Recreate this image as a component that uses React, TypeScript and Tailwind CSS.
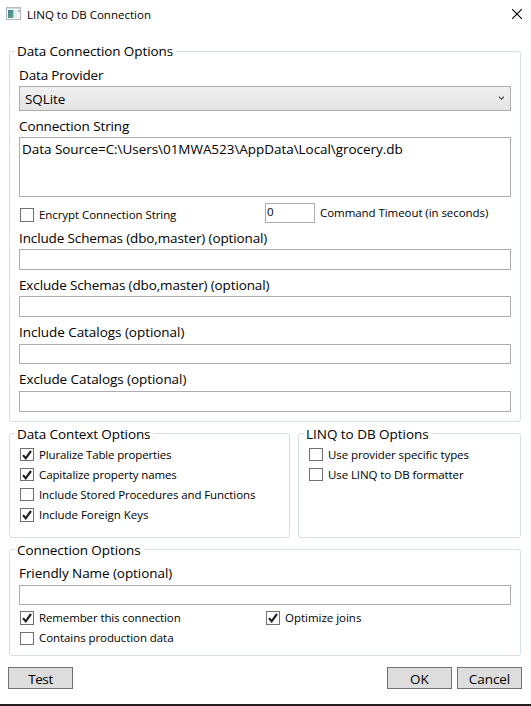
import type { ReactNode } from "react";

function Group({ title, legend, className, children }: { title: string; legend: string; className: string; children: ReactNode }) {
  return (
    <section className={`flex flex-col items-start rounded-[3px] border border-[#d5dfe5] ${className}`}>
      <h2 className={`ml-[5px] h-[18px] shrink-0 bg-white pr-[3px] pl-[2px] leading-[18px] ${legend}`}>{title}</h2>
      {children}
    </section>
  );
}

function Label({ className, children }: { className: string; children: ReactNode }) {
  return <label className={`ml-[9px] h-[18px] shrink-0 leading-[18px] ${className}`}>{children}</label>;
}

function Field({ className }: { className: string }) {
  return <div className={`ml-[9px] w-[492px] shrink-0 border border-[#abadb3] bg-white ${className}`} />;
}

function Check({ label, checked, className, box = "h-[14px]" }: { label: string; checked?: boolean; className: string; box?: string }) {
  return (
    <div className={`flex h-[14px] shrink-0 items-start text-[11.5px] ${className}`}>
      <span className={`w-[14px] shrink-0 border border-[#707070] bg-white ${box}`}>
        {checked && (
          <svg viewBox="0 0 12 12" className="size-3">
            <path d="M2 6.1 4.7 9.3 10 2" fill="none" stroke="#212121" strokeWidth="2.2" />
          </svg>
        )}
      </span>
      <span className="-mt-px ml-[5px] leading-[15px]">{label}</span>
    </div>
  );
}

function Button({ className, children }: { className: string; children: ReactNode }) {
  return (
    <button className={`flex h-[22px] w-[65px] items-start justify-center border border-[#707070] bg-[#dddddd] pt-[2px] leading-[18px] ${className}`}>
      {children}
    </button>
  );
}

export default function App() {
  return (
    <main className="flex h-[706px] w-[531px] flex-col overflow-hidden bg-white font-['Open_Sans',sans-serif] text-[13.5px] whitespace-nowrap text-black">
      <header className="flex h-[51px] shrink-0 items-start">
        <svg viewBox="0 0 15 13" className="mt-[7px] ml-[6px] h-[13px] w-[15px]">
          <defs>
            <linearGradient id="pane" x1="0" y1="0" x2="1" y2="1">
              <stop offset="0" stopColor="#3f7f9c" />
              <stop offset="1" stopColor="#62ad85" />
            </linearGradient>
          </defs>
          <rect x=".5" y=".5" width="14" height="12" fill="#f7f8f9" stroke="#b5b9be" />
          <rect x="1" y="1" width="13" height="1" fill="#d7dade" />
          <rect x="2" y="3" width="5.5" height="8" fill="url(#pane)" />
          <rect x="8" y="3" width="3" height="8" fill="#e9ebed" />
          <rect x="12" y="3" width="2" height="2" fill="#9cc5bd" />
        </svg>
        <h1 className="mt-[7px] ml-[6px] text-[11.5px] leading-[15px] tracking-[0.01px]">LINQ to DB Connection</h1>
        <svg viewBox="0 0 10 10" className="mt-[9px] mr-[9px] ml-auto size-[10px]">
          <path d="M0 0 10 10M10 0 0 10" stroke="#000" strokeWidth="1.1" />
        </svg>
      </header>

      <Group title="Data Connection Options" legend="-mt-[10px] tracking-[-0.1px]" className="ml-[9px] h-[371px] w-[512px] shrink-0">
        <Label className="mt-[6px] tracking-[-0.16px]">Data Provider</Label>
        <div className="mt-[2px] ml-[9px] flex h-[25px] w-[492px] shrink-0 items-start border border-[#acacac] bg-gradient-to-b from-[#f0f0f0] to-[#e5e5e5] pr-[6px] pl-[5px]">
          <span className="mt-[3px] leading-[18px] tracking-[-0.1px]">SQLite</span>
          <svg viewBox="0 0 5 4" className="mt-[9px] ml-auto h-[4px] w-[5px]">
            <path d="M0 0 2.5 2.2 5 0V1.7L2.5 4 0 1.7Z" fill="#505050" />
          </svg>
        </div>
        <Label className="mt-[6px] tracking-[-0.11px]">Connection String</Label>
        <div className="mt-[2px] ml-[9px] h-[60px] w-[492px] shrink-0 border border-[#abadb3] pt-[2px] pl-[2px] leading-[18px] tracking-[-0.045px]">
          Data Source=C:\Users\01MWA523\AppData\Local\grocery.db
        </div>
        <div className="mt-[6px] ml-[10px] flex h-[20px] shrink-0 items-start">
          <Check label="Encrypt Connection String" className="mt-[5px] w-[245px] tracking-[-0.07px]" />
          <div className="h-[20px] w-[50px] border border-[#abadb3] pl-px text-[11.5px] leading-[15px]">0</div>
          <span className="mt-[2px] ml-[5px] text-[11.5px] leading-[15px] tracking-[-0.06px]">Command Timeout (in seconds)</span>
        </div>
        <Label className="mt-[6px] tracking-[-0.125px]">Include Schemas (dbo,master) (optional)</Label>
        <Field className="mt-[2px] h-[21px]" />
        <Label className="mt-[6px] tracking-[-0.135px]">Exclude Schemas (dbo,master) (optional)</Label>
        <Field className="mt-[2px] h-[21px]" />
        <Label className="mt-[6px] tracking-[-0.045px]">Include Catalogs (optional)</Label>
        <Field className="mt-[3px] h-[20px]" />
        <Label className="mt-[6px] tracking-[-0.065px]">Exclude Catalogs (optional)</Label>
        <Field className="mt-[3px] h-[21px]" />
      </Group>

      <div className="mt-[11px] ml-[9px] flex h-[105px] shrink-0 gap-2">
        <Group title="Data Context Options" legend="-mt-[9px] tracking-[-0.11px]" className="w-[281px]">
          <Check label="Pluralize Table properties" checked box="h-[13px]" className="mt-[5px] ml-[10px] tracking-[-0.16px]" />
          <Check label="Capitalize property names" checked box="h-[13px]" className="mt-[6px] ml-[10px] tracking-[-0.11px]" />
          <Check label="Include Stored Procedures and Functions" box="h-[13px]" className="mt-[6px] ml-[10px] tracking-[-0.105px]" />
          <Check label="Include Foreign Keys" checked className="mt-[6px] ml-[10px] tracking-[-0.04px]" />
        </Group>
        <Group title="LINQ to DB Options" legend="-mt-[9px] tracking-[-0.03px]" className="w-[223px]">
          <Check label="Use provider specific types" box="h-[13px]" className="mt-[5px] ml-[10px] tracking-[-0.09px]" />
          <Check label="Use LINQ to DB formatter" box="h-[13px]" className="mt-[6px] ml-[10px] tracking-[-0.09px]" />
        </Group>
      </div>

      <Group title="Connection Options" legend="-mt-[9px] tracking-[-0.09px]" className="mt-[11px] ml-[9px] h-[107px] w-[512px] shrink-0">
        <Label className="mt-[5px] tracking-[-0.07px]">Friendly Name (optional)</Label>
        <Field className="mt-[3px] h-[20px]" />
        <div className="mt-[6px] ml-[10px] flex shrink-0">
          <Check label="Remember this connection" checked className="w-[246px] tracking-[-0.12px]" />
          <Check label="Optimize joins" checked className="tracking-[-0.02px]" />
        </div>
        <Check label="Contains production data" box="mt-px h-[13px]" className="mt-[6px] ml-[10px] tracking-[-0.075px]" />
      </Group>

      <footer className="mt-[11px] ml-[8px] flex w-[514px] shrink-0">
        <Button className="tracking-[-0.4px]">Test</Button>
        <Button className="ml-auto">OK</Button>
        <Button className="ml-[5px] tracking-[-0.05px]">Cancel</Button>
      </footer>
      <div className="mt-auto h-[2px] shrink-0 bg-[#231f20]" />
    </main>
  );
}
